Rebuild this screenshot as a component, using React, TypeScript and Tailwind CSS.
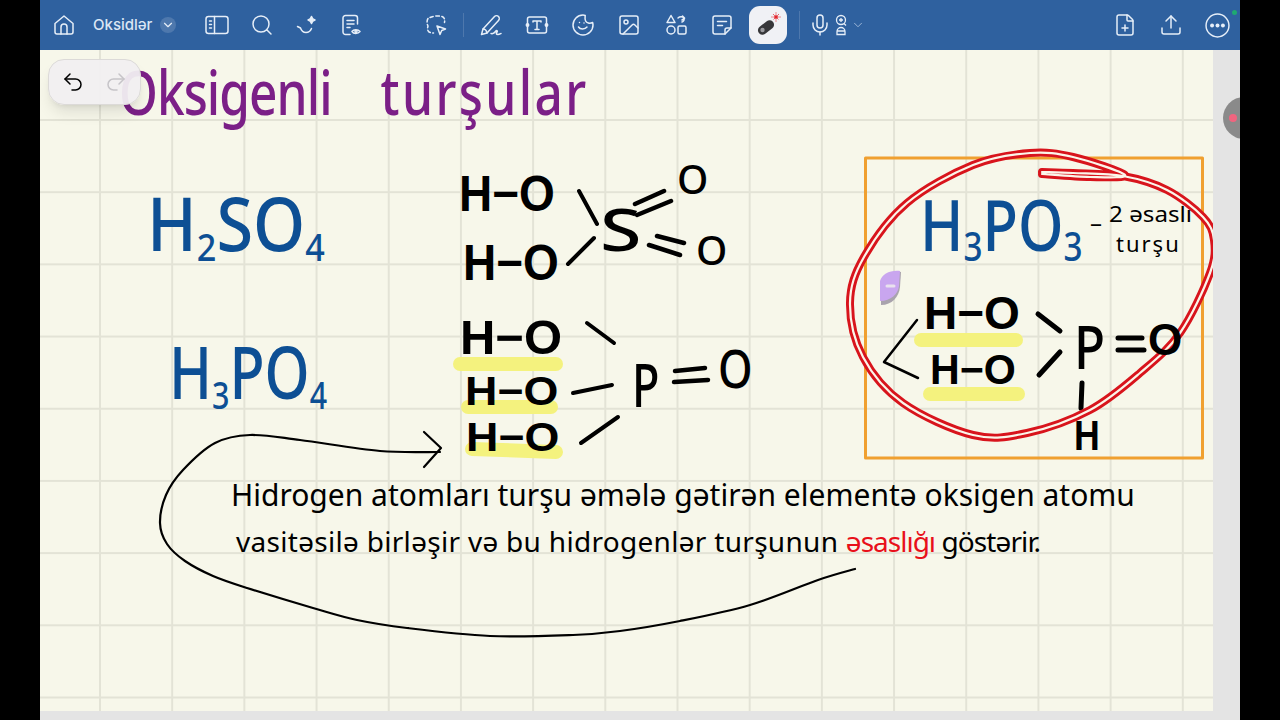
import { ChevronDown, FilePlus, Image, Mic, Redo2, Search, Undo2, Upload } from 'lucide-react';
import type { ReactNode } from 'react';

type Pt = [number, number];

// smooth line through hand-picked points (catmull-rom to bezier)
function smooth(pts: Pt[]) {
  let d = `M${pts[0][0]} ${pts[0][1]}`;
  for (let i = 0; i < pts.length - 1; i++) {
    const p0 = pts[Math.max(i - 1, 0)];
    const p1 = pts[i];
    const p2 = pts[i + 1];
    const p3 = pts[Math.min(i + 2, pts.length - 1)];
    const c1x = p1[0] + (p2[0] - p0[0]) / 6;
    const c1y = p1[1] + (p2[1] - p0[1]) / 6;
    const c2x = p2[0] - (p3[0] - p1[0]) / 6;
    const c2y = p2[1] - (p3[1] - p1[1]) / 6;
    d += `C${c1x.toFixed(1)} ${c1y.toFixed(1)} ${c2x.toFixed(1)} ${c2y.toFixed(1)} ${p2[0]} ${p2[1]}`;
  }
  return d;
}

const loop = smooth([
  [1042, 174], [1090, 177], [1125, 175], [1073, 157], [1030, 153], [973, 165], [907, 203], [864, 257],
  [850, 303], [863, 357], [903, 403], [973, 435], [1027, 433], [1090, 410], [1140, 373], [1180, 333],
  [1210, 273], [1214, 240], [1203, 217], [1167, 190], [1123, 176], [1073, 173], [1042, 172],
]);

const arrow = smooth([
  [855, 569], [818, 580], [750, 605], [680, 621], [620, 631], [573, 635], [490, 636], [407, 628], [357, 620],
  [313, 608], [247, 588], [213, 576], [185, 561], [167, 544], [160, 523], [166, 495], [183, 470], [215, 443],
  [250, 435], [300, 440], [380, 451], [440, 452],
]);

function Icon({ children }: { children: ReactNode }) {
  return (
    <svg viewBox="0 0 24 24" fill="none" stroke="currentColor" strokeWidth="1.5" strokeLinecap="round" strokeLinejoin="round" className="w-6 h-6">
      {children}
    </svg>
  );
}

function Cell({ children, className = 'w-[46px]' }: { children: ReactNode; className?: string }) {
  return <div className={`${className} h-[50px] flex items-center justify-center shrink-0`}>{children}</div>;
}

function Toolbar() {
  return (
    <div className="h-[50px] bg-[#2f619f] text-[#e6eef8] flex items-center shrink-0">
      <Cell className="w-[46px] ml-[1px]">
        <Icon>
          <path d="M3 10.5 12 3l9 7.5V19a2 2 0 0 1-2 2H5a2 2 0 0 1-2-2Z" />
          <path d="M9 21v-7a3 3 0 0 1 6 0v7" />
        </Icon>
      </Cell>
      <span className="ml-[6px] w-[67px] text-[15px] font-medium font-['Inter',sans-serif] text-[#dbe6f4]">Oksidlər</span>
      <div className="w-4 h-4 rounded-full bg-white/15 flex items-center justify-center">
        <ChevronDown className="w-3.5 h-3.5" />
      </div>
      <Cell className="w-[46px] ml-[18px]">
        <Icon>
          <rect x="1" y="3.5" width="22" height="17" rx="2.5" />
          <path d="M9.5 3.5v17M4.5 8h2M4.5 11.5h2M4.5 15h2" />
        </Icon>
      </Cell>
      <Cell className="w-[44px]"><Search className="w-6 h-6" strokeWidth={1.5} /></Cell>
      <Cell className="w-[45px]">
        <Icon>
          <path d="M16.5 3.5c.5 2 1.5 3 3.500 3.500-2 .5-3 1.500-3.500 3.500-.5-2-1.500-3-3.500-3.500 2-.5 3-1.500 3.500-3.500Z" fill="currentColor" />
          <path d="M2.500 13.500 5.500 15c1 3 3 4.500 5.500 4.500 2.500 0 4.500-1.500 5.500-4" />
        </Icon>
      </Cell>
      <Cell className="w-[44px]">
        <Icon>
          <path d="M18.500 11V5a2.500 2.500 0 0 0-2.500-2.500H6.500A2.500 2.500 0 0 0 4 5v14a2.500 2.500 0 0 0 2.500 2.500H11" />
          <path d="M8 7.500h7M8 11h7M8 14.500h3" />
          <path d="M13 18.500c1.500-2.500 6-2.500 8 0-2 2.500-6.500 2.500-8 0Z" />
          <circle cx="17" cy="18.500" r="1" />
        </Icon>
      </Cell>
      <Cell className="w-[46px] ml-[40px]">
        <Icon>
          <path d="M6 4.500C9 3 14 2.500 18 3.500c2.500.8 3 3 2.500 6M4 5.500C2.500 8 3 11 4 13c-.5 2-1 4 1 6 1.500.8 3 1 4.500 1" strokeDasharray="3.500 2.500" />
          <path d="m13 13 8.500 3-3.800 1.500L16 21.500Z" />
        </Icon>
      </Cell>
      <Cell className="w-[9px]"><div className="w-px h-6 bg-white/15" /></Cell>
      <Cell className="w-[46px]">
        <Icon>
          <path d="M2.500 21.500 4 16 15.500 3.500c1-1 3-1 4 0s1 3 0 4L8 20Z" />
          <path d="M4 16c1.500 0 3.500 1.500 4 4M12 20.500c2 .5 3.500-.5 4.500-2s2.500-1 1.500.5-1 2.500 1 2.500 2-1 3-1" />
        </Icon>
      </Cell>
      <Cell>
        <Icon>
          <rect x="2.500" y="4" width="19" height="16" rx="2" />
          <circle cx="2.500" cy="12" r="1.200" fill="currentColor" />
          <circle cx="21.500" cy="12" r="1.200" fill="currentColor" />
          <path d="M8 9V8h8v1M12 8v8.500M10 16.500h4" />
        </Icon>
      </Cell>
      <Cell>
        <Icon>
          <path d="M12 2a10 10 0 1 0 10 10c0-1-.2-1.500-.4-2.500-3 1.500-6 .5-7-1.500-1-2-.5-4-.4-5.500C13.500 2.200 13 2 12 2Z" />
          <path d="M7.500 14c1.500 2.500 6.500 2.500 8.500 0M8.500 9.500h.01M13 10h.01" />
        </Icon>
      </Cell>
      <Cell><Image className="w-6 h-6" strokeWidth={1.5} /></Cell>
      <Cell className="w-[47px]">
        <Icon>
          <path d="M7 2.500 11 9.500H3Z" />
          <path d="M14 5c1.500-1.500 5-2 6 .5 .5 1.500-.5 3-2 3.500M18.500 3 20.500 5M20.500 5.500 18 7" />
          <circle cx="7" cy="17" r="4" />
          <rect x="14" y="13" width="8" height="8" rx="1.500" />
        </Icon>
      </Cell>
      <Cell>
        <Icon>
          <path d="M5 3h14a2 2 0 0 1 2 2v10l-6 6H5a2 2 0 0 1-2-2V5a2 2 0 0 1 2-2Z" />
          <path d="M21 15h-4a2 2 0 0 0-2 2v4M7.500 8.500h9M7.500 12.500h5" />
        </Icon>
      </Cell>
      <Cell>
        <div className="w-[38px] h-[38px] rounded-[11px] bg-[#f0f1f5] flex items-center justify-center">
          <svg viewBox="0 0 28 28" className="w-7 h-7">
            <rect x="3" y="12" width="18" height="9" rx="4.500" fill="#37373a" transform="rotate(-38 12 16.500)" />
            <circle cx="8.500" cy="19" r="2.200" fill="#9a9a9e" />
            <circle cx="22" cy="6" r="1.800" fill="#e3262e" />
            <path d="M22 1.500v9M17.500 6h9M19 3l6 6M25 3l-6 6" stroke="#e3262e" strokeWidth="1" strokeDasharray="1 1" />
          </svg>
        </div>
      </Cell>
      <Cell className="w-[17px]"><div className="w-px h-7 bg-white/15" /></Cell>
      <Cell className="w-[24px]"><Mic className="w-6 h-6" strokeWidth={1.5} /></Cell>
      <Cell className="w-[18px]">
        <svg viewBox="0 0 14 24" fill="none" stroke="currentColor" strokeWidth="1.300" className="w-3.5 h-6">
          <circle cx="7" cy="7" r="4.500" />
          <path d="M5 7h4M7 5v4M10 10.500l2 2" />
          <path d="M3 21.500v-3a4 4 0 0 1 8 0v3ZM3 18h8" />
        </svg>
      </Cell>
      <Cell className="w-[16px]"><ChevronDown className="w-3.5 h-3.5 text-[#a9c0de]" strokeWidth={1.5} /></Cell>
      <div className="flex-1" />
      <Cell><FilePlus className="w-6 h-6" strokeWidth={1.5} /></Cell>
      <Cell><Upload className="w-6 h-6" strokeWidth={1.5} /></Cell>
      <Cell>
        <svg viewBox="0 0 24 24" className="w-[25px] h-[25px]">
          <circle cx="12" cy="12" r="11" fill="none" stroke="currentColor" strokeWidth="1.400" />
          <circle cx="6.800" cy="12" r="1.900" fill="currentColor" />
          <circle cx="12" cy="12" r="1.900" fill="currentColor" />
          <circle cx="17.200" cy="12" r="1.900" fill="currentColor" />
        </svg>
      </Cell>
    </div>
  );
}

function Strokes() {
  return (
    <svg viewBox="40 50 1173 661" fill="none" strokeLinecap="round" strokeLinejoin="round" className="absolute inset-0 w-full h-full">
      {/* marker */}
      <g stroke="#f4f27e" strokeWidth="14">
        <path d="M460 364H556" />
        <path d="M468 407H551" />
        <path d="M472 449 556 452" />
        <path d="M921 340H1016" />
        <path d="M930 394H1018" />
      </g>
      <rect x="865.500" y="158" width="337" height="300" stroke="#f0a030" strokeWidth="3" />

      {/* bonds */}
      <g stroke="#000" strokeWidth="4">
        <path d="M579 191 597 224M568 264 594 238" />
        <path d="M635 204 664 191M637 215 671 201M657 236 684 243M649 245 680 255" strokeWidth="4.500" />
        <path d="M587 323 614 343M573 393 612 385M581 443 618 417" />
        <path d="M675 371 705 368M674 382 708 380" strokeWidth="4.500" />
        <path d="M1038 314 1060 331M1039 375 1060 352" strokeWidth="5" />
        <path d="M1118 338H1142M1118 350H1144" strokeWidth="5" />
        <path d="M1082 383 1081 408" strokeWidth="5" />
        <path d="M917 320 884 362 918 378" strokeWidth="2.500" />
      </g>

      {/* arrow */}
      <path d={arrow} stroke="#000" strokeWidth="2.200" />
      <path d="M424 432 441 448 424 467" stroke="#000" strokeWidth="2.200" />

      {/* eraser blob */}
      <path d="M881 283c2-8 10-12 20-11l-1 15c-1 10-8 18-19 18Z" fill="#a9a3ad" />
      <path d="M880 281c2-7 10-11 20-10l-1 15c-1 8-8 15-19 15Z" fill="#c9a6ef" />
      <path d="M887 286h7" stroke="#e9e2ee" strokeWidth="3" />

      {/* red loop */}
      <path d={loop} stroke="#d8141c" strokeWidth="8" />
      <path d={loop} stroke="#fbf5ea" strokeWidth="2.200" />
    </svg>
  );
}

const chem = "absolute whitespace-pre leading-none origin-top-left font-['Liberation_Sans',sans-serif] font-bold text-black";
const letter = "absolute whitespace-pre leading-none origin-top-left font-['Noto_Sans',sans-serif] font-medium text-black";
const blue = "absolute whitespace-pre leading-none origin-top-left font-['Noto_Sans',sans-serif] font-medium text-[#0d4f94]";
const note = "absolute whitespace-pre leading-none origin-top-left font-['Noto_Sans',sans-serif] text-black";

function Writing() {
  return (
    <>
      <span className="absolute whitespace-pre leading-none origin-top-left font-['Noto_Sans',sans-serif] font-medium text-[#7b1f87] left-[79px] top-[10px] text-[62px] scale-x-[.8]">
        <span className="tracking-[-1.2px]">Oksigenli</span>
        <span className="ml-[42px] tracking-[3px]"> turşular</span>
      </span>

      <span className={`${blue} left-[107px] top-[136px] text-[74px] scale-x-[.9]`}>
        H<sub className="text-[38px]">2</sub>SO<sub className="text-[38px]">4</sub>
      </span>
      <span className={`${blue} left-[129px] top-[285px] text-[72px] scale-x-[.8]`}>
        H<sub className="text-[38px]">3</sub>PO<sub className="text-[38px]">4</sub>
      </span>
      <span className={`${blue} left-[880px] top-[139px] text-[70px] scale-x-[.83]`}>
        H<sub className="text-[40px]">3</sub>PO<sub className="text-[40px]">3</sub>
      </span>

      <span className={`${chem} left-[419px] top-[119px] text-[50px] scale-x-[.92]`}>H−O</span>
      <span className={`${chem} left-[423px] top-[188px] text-[50px] scale-x-[.92]`}>H−O</span>
      <span className={`${letter} left-[560px] top-[150px] text-[58px] scale-x-[1.3]`}>S</span>
      <span className={`${letter} left-[637px] top-[109px] text-[40px]`}>O</span>
      <span className={`${letter} left-[656px] top-[180px] text-[40px]`}>O</span>

      <span className={`${chem} left-[420px] top-[264px] text-[48px] scale-x-[1.02]`}>H−O</span>
      <span className={`${chem} left-[425px] top-[321px] text-[40px] scale-x-[1.12]`}>H−O</span>
      <span className={`${chem} left-[426px] top-[367px] text-[40px] scale-x-[1.12]`}>H−O</span>
      <span className={`${letter} left-[592px] top-[304px] text-[60px] scale-x-[.75]`}>P</span>
      <span className={`${letter} left-[678px] top-[292px] text-[52px] scale-x-[.85]`}>O</span>

      <span className={`${chem} left-[884px] top-[240px] text-[46px]`}>H−O</span>
      <span className={`${chem} left-[890px] top-[299px] text-[42px] scale-x-[.98]`}>H−O</span>
      <span className={`${letter} left-[1034px] top-[266px] text-[60px] scale-x-[.85]`}>P</span>
      <span className={`${chem} left-[1108px] top-[268px] text-[44px]`}>O</span>
      <span className={`${chem} left-[1034px] top-[365px] text-[42px] scale-x-[.85]`}>H</span>

      <span className={`${note} left-[1050px] top-[160px] text-[24px]`}>–</span>
      <span className={`${note} left-[1069px] top-[152px] text-[22px] scale-x-[1.1]`}>2 əsaslı</span>
      <span className={`${note} left-[1076px] top-[182px] text-[22px] tracking-[2px]`}>turşu</span>

      <span className={`${note} left-[191px] top-[430px] text-[30px]`}>Hidrogen atomları turşu əmələ gətirən elementə oksigen atomu</span>
      <span className={`${note} left-[196px] top-[477px] text-[28px]`}>
        <span className="tracking-[0.3px]">vasitəsilə birləşir və bu hidrogenlər turşunun </span>
        <span className="text-[#e8101a] tracking-[-1px]">əsaslığı</span>
        <span className="tracking-[-0.9px]"> göstərir.</span>
      </span>
    </>
  );
}

export default function App() {
  return (
    <div className="h-screen w-full bg-black overflow-hidden px-[40px]">
      <div className="relative h-full w-[1200px] flex flex-col bg-[#e4e4e4] overflow-hidden">
        <Toolbar />
        <div className="flex-1 pb-[9px]">
          <div className="relative h-full w-[1173px] bg-[#f7f7ea] bg-[linear-gradient(to_right,#e3e3d6_2px,transparent_2px),linear-gradient(to_bottom,#e3e3d6_2px,transparent_2px)] bg-[size:72.2px_72.2px] bg-[position:59px_69px]">
            <Strokes />
            <Writing />
          </div>
        </div>

        {/* undo / redo */}
        <div className="absolute left-[8px] top-[59px] w-[93px] h-[46px] rounded-2xl bg-[#f1eff1]/95 border border-[#dcdad8] shadow-lg flex items-center justify-between px-[12px]">
          <Undo2 className="w-6 h-6 text-black" strokeWidth={1.5} />
          <Redo2 className="w-6 h-6 text-[#c6c4c8]" strokeWidth={1.5} />
        </div>

        {/* recording dot */}
        <div className="absolute right-[-25px] top-[97px] w-[42px] h-[42px] rounded-full bg-[#8a8a8a] flex items-center pl-[6px]">
          <div className="w-2 h-2 rounded-full bg-[#f0657f]" />
        </div>
        <div className="absolute right-[3px] top-[10px] w-[5px] h-[5px] rounded-full bg-[#1fa971]" />
      </div>
    </div>
  );
}
